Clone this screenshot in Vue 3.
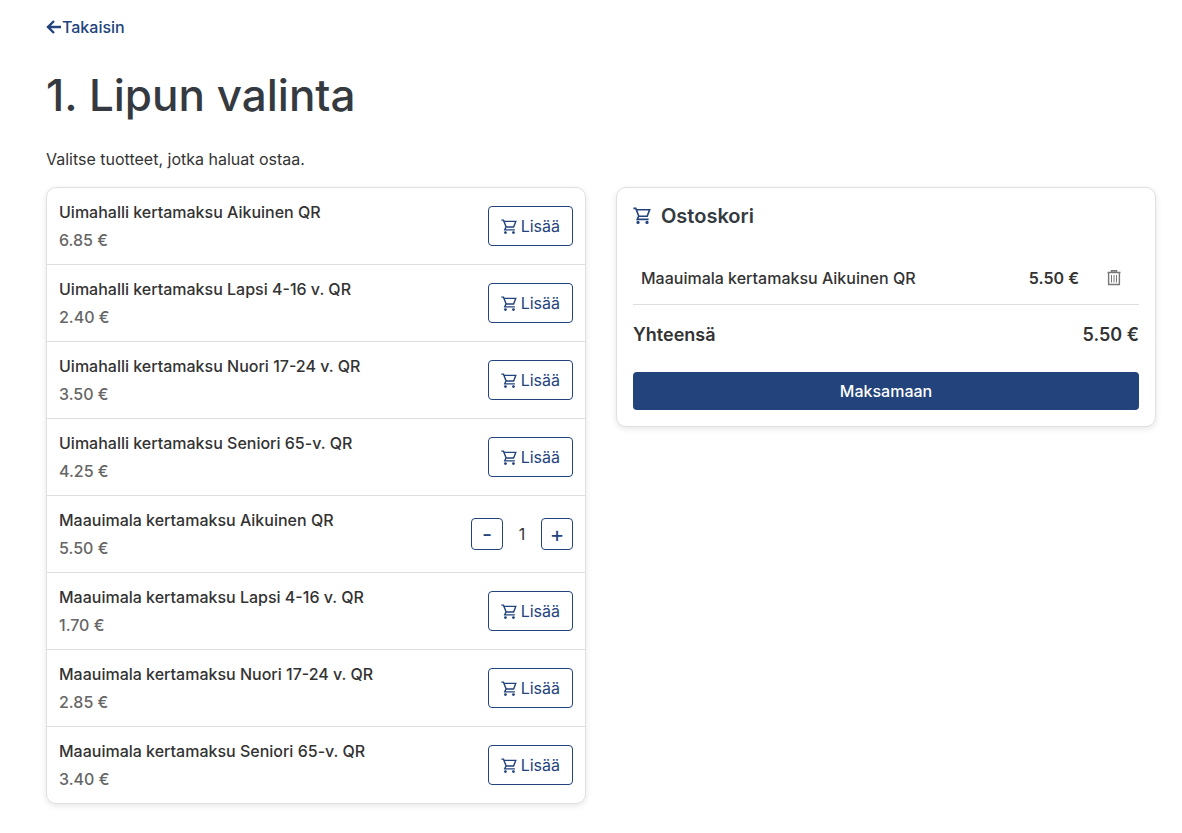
<template>
  <main class="page">
    <a href="#" class="back-link">
      <svg viewBox="0 0 16 16" class="back-icon" aria-hidden="true">
        <path d="M15 8H2.5M8 2L2 8l6 6" fill="none" stroke="currentColor" stroke-width="2.4" />
      </svg>
      <span>Takaisin</span>
    </a>

    <h1 class="title">1. Lipun valinta</h1>
    <p class="intro">Valitse tuotteet, jotka haluat ostaa.</p>

    <div class="columns">
      <ul class="card product-list">
        <li v-for="product in products" :key="product.id" class="product">
          <div class="product-info">
            <div class="product-name">{{ product.name }}</div>
            <div class="product-price">{{ formatPrice(product.price) }}</div>
          </div>

          <div v-if="product.count > 0" class="counter">
            <button type="button" class="count-btn" aria-label="Vähennä" @click="product.count--">
              -
            </button>
            <span class="count">{{ product.count }}</span>
            <button type="button" class="count-btn" aria-label="Lisää yksi" @click="product.count++">
              +
            </button>
          </div>
          <button v-else type="button" class="add-btn" @click="product.count = 1">
            <svg viewBox="0 -2 18 18" class="cart-icon" aria-hidden="true">
              <path :d="cartPath" fill="none" stroke="currentColor" stroke-width="1.6" />
              <circle cx="5" cy="14.4" r="1.6" fill="currentColor" />
              <circle cx="14" cy="14.4" r="1.6" fill="currentColor" />
            </svg>
            <span>Lisää</span>
          </button>
        </li>
      </ul>

      <section class="card cart">
        <h2 class="cart-title">
          <svg viewBox="0 -1 18 18" class="cart-title-icon" aria-hidden="true">
            <path :d="cartPath" fill="none" stroke="currentColor" stroke-width="1.6" />
            <circle cx="5" cy="14.4" r="1.6" fill="currentColor" />
            <circle cx="14" cy="14.4" r="1.6" fill="currentColor" />
          </svg>
          <span>Ostoskori</span>
        </h2>

        <div v-for="item in cartItems" :key="item.id" class="cart-row">
          <span class="cart-name">{{ item.name }}</span>
          <span class="cart-price">{{ formatPrice(item.price * item.count) }}</span>
          <button type="button" class="remove-btn" aria-label="Poista" @click="item.count = 0">
            <svg viewBox="0 0 14 16" class="trash-icon" aria-hidden="true">
              <path
                d="M0.5 2.5h13M4.5 2.5v-1.8h5v1.8M1.6 2.5v12h10.8v-12"
                fill="none"
                stroke="currentColor"
                stroke-width="1.4"
              />
              <path d="M4.5 5v7.5M7 5v7.5M9.5 5v7.5" fill="none" stroke="currentColor" />
            </svg>
          </button>
        </div>

        <div class="total">
          <span>Yhteensä</span>
          <span>{{ formatPrice(total) }}</span>
        </div>

        <button type="button" class="pay-btn">Maksamaan</button>
      </section>
    </div>
  </main>
</template>

<script setup>
import { computed, ref } from 'vue'

const cartPath = 'M0.4 0.4h2.4l3 7.8h8.4L16.6 1.8H3.4M5.6 8.2L4.2 11.4h11.4'

const products = ref([
  { id: 1, name: 'Uimahalli kertamaksu Aikuinen QR', price: 6.85, count: 0 },
  { id: 2, name: 'Uimahalli kertamaksu Lapsi 4-16 v. QR', price: 2.4, count: 0 },
  { id: 3, name: 'Uimahalli kertamaksu Nuori 17-24 v. QR', price: 3.5, count: 0 },
  { id: 4, name: 'Uimahalli kertamaksu Seniori 65-v. QR', price: 4.25, count: 0 },
  { id: 5, name: 'Maauimala kertamaksu Aikuinen QR', price: 5.5, count: 1 },
  { id: 6, name: 'Maauimala kertamaksu Lapsi 4-16 v. QR', price: 1.7, count: 0 },
  { id: 7, name: 'Maauimala kertamaksu Nuori 17-24 v. QR', price: 2.85, count: 0 },
  { id: 8, name: 'Maauimala kertamaksu Seniori 65-v. QR', price: 3.4, count: 0 },
])

const cartItems = computed(() => products.value.filter((p) => p.count > 0))
const total = computed(() => cartItems.value.reduce((sum, p) => sum + p.price * p.count, 0))

function formatPrice(value) {
  return `${value.toFixed(2)} €`
}
</script>

<style>
body {
  margin: 0;
  background: #fff;
}
</style>

<style scoped>
.page {
  box-sizing: border-box;
  padding: 15px 26px 28px 46px;
  font-family: Inter, 'Liberation Sans', sans-serif;
  font-size: 16px;
  line-height: 24px;
  color: #343a40;
}

button {
  box-sizing: border-box;
  padding: 0;
  font: inherit;
  cursor: pointer;
}

.back-link {
  display: flex;
  align-items: center;
  width: fit-content;
  font-weight: 500;
  color: #22437c;
  text-decoration: none;
}

.back-icon {
  width: 16px;
  height: 16px;
}

.title {
  margin: 28px 0 24px;
  font-size: 44px;
  font-weight: 500;
  line-height: 56px;
}

.intro {
  margin: 0 0 16px;
  color: #333;
}

.columns {
  display: grid;
  grid-template-columns: 1fr 1fr;
  align-items: start;
  gap: 30px;
}

.card {
  box-sizing: border-box;
  border: 1px solid #dee0e2;
  border-radius: 10px;
  background: #fff;
  box-shadow: 0 2px 6px rgba(0, 0, 0, 0.1);
}

.product-list {
  margin: 0;
  padding: 0;
  list-style: none;
}

.product {
  display: flex;
  align-items: center;
  justify-content: space-between;
  padding: 12px;
}

.product + .product {
  border-top: 1px solid #dedede;
}

.product-info {
  display: grid;
  gap: 4px;
  font-weight: 500;
}

.product-name {
  color: #333;
}

.product-price {
  color: #666;
}

.add-btn {
  display: flex;
  align-items: center;
  gap: 4px;
  height: 40px;
  padding: 0 12px;
  border: 1px solid #22437c;
  border-radius: 4px;
  background: #fff;
  color: #22437c;
}

.cart-icon {
  width: 16px;
  height: 16px;
}

.counter {
  display: flex;
  align-items: center;
}

.count-btn {
  width: 32px;
  height: 32px;
  border: 1px solid #22437c;
  border-radius: 4px;
  background: #fff;
  font-size: 22px;
  font-weight: 400;
  line-height: 24px;
  color: #22437c;
}

.count {
  width: 38px;
  text-align: center;
  color: #333;
}

.cart {
  padding: 16px;
}

.cart-title {
  display: flex;
  align-items: center;
  gap: 10px;
  margin: 0 0 32px;
  font-size: 20px;
  font-weight: 600;
  line-height: 24px;
}

.cart-title-icon {
  width: 18px;
  height: 18px;
  color: #22437c;
}

.cart-row {
  display: flex;
  align-items: center;
  padding: 6px 8px 14px;
  border-bottom: 1px solid #dedede;
  font-weight: 500;
  color: #333;
}

.cart-name {
  flex: 1;
}

.cart-price {
  font-weight: 600;
}

.remove-btn {
  display: flex;
  align-items: center;
  justify-content: center;
  width: 34px;
  height: 24px;
  margin-left: 18px;
  border: 0;
  background: transparent;
  color: #777;
}

.trash-icon {
  width: 14px;
  height: 16px;
}

.total {
  display: flex;
  justify-content: space-between;
  margin: 18px 0 25px;
  font-size: 18px;
  font-weight: 600;
  color: #333;
}

.pay-btn {
  display: block;
  width: 100%;
  height: 38px;
  border: 0;
  border-radius: 4px;
  background: #22437c;
  font-weight: 500;
  color: #fff;
}
</style>
